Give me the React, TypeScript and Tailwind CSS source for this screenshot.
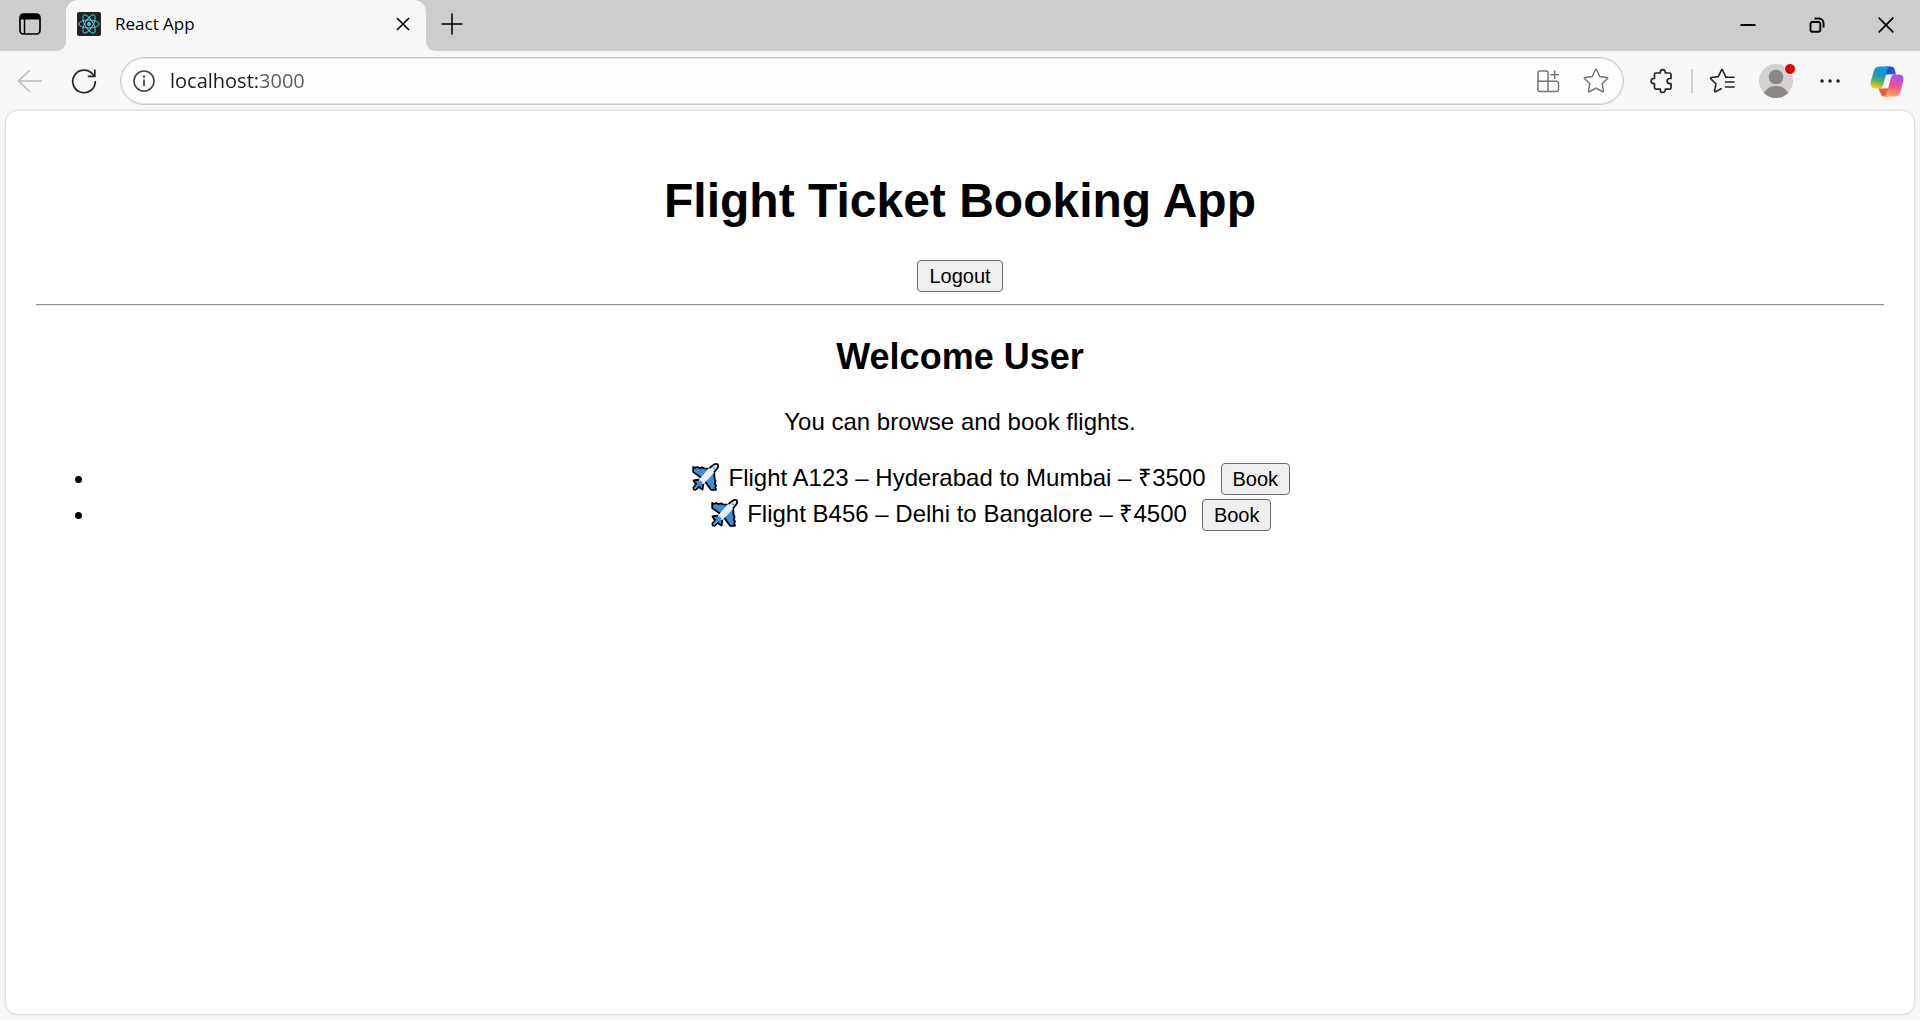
import React from "react";

type Flight = { code: string; from: string; to: string; price: number };

const flights: Flight[] = [
  { code: "A123", from: "Hyderabad", to: "Mumbai", price: 3500 },
  { code: "B456", from: "Delhi", to: "Bangalore", price: 4500 },
];

function TabStrip() {
  return (
    <header className="flex h-[51px] bg-[#f7f7f7] text-black">
      <div className="flex w-[66px] items-center rounded-br-[9px] bg-[#cdcdcd] pb-[3px] pl-[18px]">
        <button aria-label="Tab actions">
          <svg width="24" height="24" viewBox="0 0 24 24" fill="none" stroke="currentColor" strokeWidth="1.7">
            <rect x="2" y="2" width="20" height="20" rx="3.5" />
            <path d="M2 7.500V5a3 3 0 0 1 3-3h14a3 3 0 0 1 3 3v2.500z" fill="currentColor" stroke="none" />
            <path d="M6.500 7v15" strokeWidth="1.500" />
          </svg>
        </button>
      </div>
      <div className="w-[360px] bg-linear-to-b from-[#cdcdcd] from-50% to-[#f7f7f7] to-50%">
        <div className="flex h-full items-center rounded-t-[12px] bg-[#f7f7f7] pr-[11px] pb-[3px] pl-[11px]">
          <svg width="24" height="24" viewBox="0 0 24 24" fill="none" stroke="#58c4dc" strokeWidth="1">
            <rect width="24" height="24" rx="2" fill="#222" stroke="none" />
            <circle cx="12" cy="12" r="2" fill="#58c4dc" stroke="none" />
            <ellipse cx="12" cy="12" rx="10.300" ry="4" />
            <ellipse cx="12" cy="12" rx="10.300" ry="4" transform="rotate(60 12 12)" />
            <ellipse cx="12" cy="12" rx="10.300" ry="4" transform="rotate(120 12 12)" />
          </svg>
          <span className="ml-[14px] flex-1 text-[17px] leading-6">React App</span>
          <button aria-label="Close tab" className="flex size-6 items-center justify-center">
            <svg width="14" height="14" viewBox="0 0 14 14" stroke="currentColor" strokeWidth="1.600">
              <path d="M1 1l12 12M13 1L1 13" />
            </svg>
          </button>
        </div>
      </div>
      <div className="flex flex-1 rounded-bl-[9px] bg-[#cdcdcd] pb-[3px]">
        <button aria-label="New tab" className="flex w-[52px] items-center justify-center">
          <svg width="22" height="22" viewBox="0 0 22 22" stroke="currentColor" strokeWidth="1.500">
            <path d="M.5 11h21M11 .5v21" />
          </svg>
        </button>
        <div className="flex-1" />
        <button aria-label="Minimize" className="flex w-[69px] items-center justify-center pt-[2px]">
          <svg width="16" height="16" viewBox="0 0 16 16" stroke="currentColor" strokeWidth="2">
            <path d="M.5 8h15" />
          </svg>
        </button>
        <button aria-label="Restore" className="flex w-[69px] items-center justify-center pt-[2px]">
          <svg width="16" height="16" viewBox="0 0 16 16" fill="none" stroke="currentColor" strokeWidth="1.900">
            <rect x="1.500" y="5" width="9.800" height="9.800" rx="2" />
            <path d="M5.500 1.500h4.500a4.500 4.500 0 0 1 4.500 4.500v4.500" />
          </svg>
        </button>
        <button aria-label="Close window" className="flex w-[69px] items-center justify-center pt-[2px]">
          <svg width="16" height="16" viewBox="0 0 16 16" stroke="currentColor" strokeWidth="1.700">
            <path d="M.7.7l14.600 14.600M15.300.7L.7 15.300" />
          </svg>
        </button>
      </div>
    </header>
  );
}

function ToolButton({ label, children }: { label: string; children: React.ReactNode }) {
  return (
    <button aria-label={label} className="flex h-12 w-12 shrink-0 items-center justify-center">
      {children}
    </button>
  );
}

function Toolbar() {
  return (
    <nav className="flex h-[60px] items-center bg-[#f7f7f7] pr-[9px] pl-[6px] text-[#242424]">
      <ToolButton label="Back">
        <svg width="26" height="26" viewBox="0 0 26 26" fill="none" stroke="#bcbcbc" strokeWidth="1.500">
          <path d="M25 13H1.500M13 2L1.500 13 13 24" />
        </svg>
      </ToolButton>
      <div className="ml-[6px]">
        <ToolButton label="Refresh">
          <svg width="26" height="26" viewBox="0 0 26 26" fill="none" stroke="currentColor" strokeWidth="1.700">
            <path d="M24.300 13A11.300 11.300 0 1 1 21.800 6.300L23 8" />
            <path d="M23.800 1.500v6.800h-7" />
          </svg>
        </ToolButton>
      </div>
      <div className="ml-[12px] flex h-12 min-w-0 flex-1 items-center rounded-full border border-[#c9c9c9] bg-[#fdfdfd] pr-[3px] shadow-[inset_0_0_0_1px_#e6e6e6]">
        <button aria-label="Site information" className="flex w-[46px] justify-center">
          <svg width="24" height="24" viewBox="0 0 24 24" fill="none" stroke="#444" strokeWidth="1.600">
            <circle cx="12" cy="12" r="10" />
            <path d="M12 10.500v6.500" strokeWidth="1.800" />
            <circle cx="12" cy="7.500" r="1.200" fill="#444" stroke="none" />
          </svg>
        </button>
        <input
          aria-label="Address"
          defaultValue="localhost:3000"
          className="ml-[3px] min-w-0 flex-1 bg-linear-to-r from-[#1b1b1b] from-[88px] to-[#5c5c5c] to-[88px] bg-clip-text text-[20px] leading-7 text-transparent outline-none"
        />
        <div className="flex text-[#757575]">
          <ToolButton label="App available">
            <svg width="24" height="24" viewBox="0 0 24 24" fill="none" stroke="currentColor" strokeWidth="1.500">
              <path d="M12 22.500H4a2 2 0 0 1-2-2V4a2 2 0 0 1 2-2h6a2 2 0 0 1 2 2v18.500zM2 12.200h18.500a2 2 0 0 1 2 2v6.300a2 2 0 0 1-2 2H12" />
              <path d="M18.700 1.500v8.500M14.500 5.700H23" />
            </svg>
          </ToolButton>
          <ToolButton label="Add to favorites">
            <svg width="26" height="26" viewBox="0 0 26 26" fill="none" stroke="currentColor" strokeWidth="1.500" strokeLinejoin="round">
              <path d="M12.300 2q.7-1.400 1.400 0l3.100 6.500 7 .9q1.500.3.500 1.400l-5.200 4.900 1.300 7q.2 1.500-1.200.8L13 20.100l-6.200 3.400q-1.400.7-1.200-.8l1.300-7-5.200-4.900q-1-1.100.5-1.400l7-.9z" />
            </svg>
          </ToolButton>
        </div>
      </div>
      <div className="ml-[14px] flex items-center">
        <ToolButton label="Extensions">
          <svg width="24" height="26" viewBox="0 0 24 26" fill="none" stroke="currentColor" strokeWidth="1.700" strokeLinejoin="round">
            <path d="M4.500 6.500a1.500 1.500 0 0 1 1.500-1.500h4.300v-.8a2.500 2.500 0 0 1 5 0V5h4.200a1.500 1.500 0 0 1 1.500 1.500v4h-1.300a2.600 2.600 0 0 0 0 5.200H21v4a1.500 1.500 0 0 1-1.500 1.500h-4.200v.8a2.500 2.500 0 0 1-5 0v-.8H6a1.500 1.500 0 0 1-1.500-1.500v-4h-.8a2.600 2.600 0 0 1 0-5.200h.8z" />
          </svg>
        </ToolButton>
        <div className="mx-[5px] h-6 w-[2px] bg-[#cfcfcf]" />
        <ToolButton label="Favorites">
          <svg width="26" height="26" viewBox="0 0 26 26" fill="none" stroke="currentColor" strokeWidth="1.600" strokeLinejoin="round" strokeLinecap="round">
            <path d="M17 9.300l-3.300-7q-.7-1.400-1.400 0L9.300 8.600l-6.900.9q-1.500.3-.5 1.400l5 4.900-1.300 7q-.2 1.500 1.200.8l5.400-2.900" />
            <path d="M17 9.300h8M16.500 14h8.500M16.500 19h8.500" />
          </svg>
        </ToolButton>
        <button aria-label="Profile" className="relative mx-[6px] flex h-12 w-12 items-center justify-center">
          <svg width="34" height="34" viewBox="0 0 34 34">
            <clipPath id="avatar">
              <circle cx="17" cy="17" r="17" />
            </clipPath>
            <g clipPath="url(#avatar)">
              <rect width="34" height="34" fill="#d3d1cf" />
              <circle cx="17" cy="13" r="7.300" fill="#8a8784" />
              <ellipse cx="17" cy="33" rx="13" ry="11" fill="#8a8784" />
            </g>
          </svg>
          <span className="absolute top-[6px] right-[4px] size-[12px] rounded-full border-[1px] border-[#f7f7f7] bg-[#e30000]" />
        </button>
        <ToolButton label="Settings and more">
          <svg width="22" height="6" viewBox="0 0 22 6" fill="currentColor">
            <circle cx="3" cy="3" r="1.800" />
            <circle cx="11" cy="3" r="1.800" />
            <circle cx="19" cy="3" r="1.800" />
          </svg>
        </ToolButton>
        <div className="ml-[9px]">
          <ToolButton label="Copilot">
            <svg width="34" height="31" viewBox="0 0 34 31">
              <defs>
                <linearGradient id="cp-a" x1="0.600" y1="0" x2="0.400" y2="1">
                  <stop offset="0" stopColor="#1497e8" />
                  <stop offset=".4" stopColor="#1795c8" />
                  <stop offset=".68" stopColor="#52b46a" />
                  <stop offset="1" stopColor="#ffd000" />
                </linearGradient>
                <linearGradient id="cp-b" x1="0.600" y1="0" x2="0.400" y2="1">
                  <stop offset="0" stopColor="#a453f2" />
                  <stop offset=".5" stopColor="#ee5190" />
                  <stop offset="1" stopColor="#ffa65c" />
                </linearGradient>
                <linearGradient id="cp-c" x1="0" y1="0" x2="1" y2="1">
                  <stop offset="0" stopColor="#174cc5" />
                  <stop offset="1" stopColor="#2460df" />
                </linearGradient>
              </defs>
              <path d="M16 .5h4.500c2.500 0 3.500 1.200 4.200 3.200L26 8.500H15z" fill="url(#cp-c)" />
              <path d="M8.500 22.300H19.500l-1 8.200h-4c-2 0-3.200-1-3.900-3z" fill="#f05a3c" />
              <path d="M9.500.5H21c-2.300.2-3.200 1.500-3.900 3.700L13.200 19.500c-.6 2-1.800 3-4.200 3H5C1 22.500-.1 19.300.8 15.500L4 4.500C4.800 1.800 6.500.5 9.500.5z" fill="url(#cp-a)" />
              <path d="M24.500 30.500H13c2.300-.2 3.200-1.500 3.900-3.700L20.800 11.500c.6-2 1.800-3 4.200-3H29c4 0 5.100 3.200 4.200 7L30 26.500c-.8 2.700-2.500 4-5.500 4z" fill="url(#cp-b)" />
              <path d="M18.700 8.700H24c-1.700.2-2.700 1-3.200 2.800L18.200 20c-.5 1.600-1.300 2.300-2.900 2.300H10c1.700-.2 2.700-1 3.200-2.800L15.800 11c.5-1.600 1.300-2.300 2.900-2.300z" fill="#fbfbfb" />
            </svg>
          </ToolButton>
        </div>
      </div>
    </nav>
  );
}

function Plane() {
  return (
    <svg
      role="img"
      aria-label="Airplane"
      className="mx-[2px] inline-block align-[-5px]"
      width="28"
      height="28"
      viewBox="0 0 28 28"
      stroke="#000"
      strokeWidth="1.800"
      strokeLinejoin="round"
    >
      <g fill="#3a8edf">
        <path d="M1.200 4l2.300.8L5.300 4l2.200 1.300 2.300-.9 2.400 1L19 5.800 11 16 1.200 9z" />
        <path d="M24 26.800l-.8-2.300.8-1.800-1.300-2.200.9-2.300-1-2.400L22.200 9 12 17l7 9.800z" />
        <path d="M1.500 17.500L8 16.500l2.500 2.500-5 3-2.500-2z" />
        <path d="M10.500 26.500L11.500 20 9 17.500l-3 5L8 25z" />
      </g>
      <path d="M17.500 4.500l4.500-3q2-1 3.700-.2.900 1.700-.2 3.700l-3 4.500L11.500 21 7 21l0-4.500z" fill="#eceef0" stroke="none" />
      <path d="M17.500 5l4.500-3.500q2-1 3.700-.2.900 1.700-.2 3.700L22 9.500M4.500 21l-3.200 3.600.5 1.700 1.700.5 3.500-3.200" fill="none" />
      <path d="M8 17l-5.800 7.800.3.600.6.300L11 20z" fill="#3a8edf" stroke="none" />
      <path d="M21.300 4.500l1.700 1.700" stroke="#35b8ee" strokeWidth="1.800" />
    </svg>
  );
}

function PlainButton({ className = "", children }: { className?: string; children: React.ReactNode }) {
  return (
    <button
      className={
        "h-8 rounded-[4px] border border-[#6b6b6b] bg-[#efefef] px-[11px] align-baseline text-[20px] leading-[30px] hover:bg-[#e5e5e5] " +
        className
      }
    >
      {children}
    </button>
  );
}

export default function App() {
  return (
    <div className="flex min-h-screen flex-col bg-[#f7f7f7] font-['Open_Sans',sans-serif]">
      <TabStrip />
      <Toolbar />
      <main className="mx-[6px] mb-[6px] flex-1 rounded-[12px] bg-white p-[30px] text-center font-['Liberation_Sans',Arial,sans-serif] text-[24px] leading-7 text-black shadow-[0_0_3px_rgba(0,0,0,0.25)]">
        <h1 className="my-8 text-[48px] leading-[55px] font-bold">Flight Ticket Booking App</h1>
        <PlainButton className="mx-auto block">Logout</PlainButton>
        <hr className="mt-[12px] mb-[30px] h-[2px] border-t border-b border-t-[#8f8f8f] border-b-[#e6e6e6]" />
        <h2 className="text-[36px] leading-[42px] font-bold">Welcome User</h2>
        <p className="mt-[30px] mb-6">You can browse and book flights.</p>
        <ul className="list-disc pl-[60px] leading-9">
          {flights.map((f) => (
            <li key={f.code} className="h-9">
              <Plane /> Flight {f.code} – {f.from} to {f.to} – ₹{f.price}
              <PlainButton className="ml-[15px]">Book</PlainButton>
            </li>
          ))}
        </ul>
      </main>
    </div>
  );
}
